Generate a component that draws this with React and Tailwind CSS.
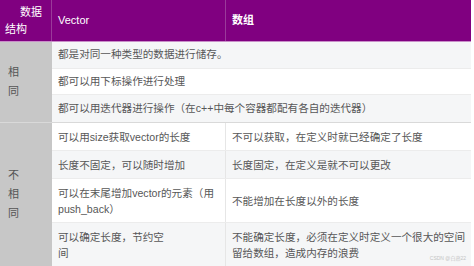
const rows = [
  { kind: 'merged', text: '都是对同一种类型的数据进行储存。', shade: true },
  { kind: 'merged', text: '都可以用下标操作进行处理', shade: false },
  { kind: 'merged', text: '都可以用迭代器进行操作（在c++中每个容器都配有各自的迭代器）', shade: true },
  { kind: 'split', vec: ['可以用size获取vector的长度'], arr: ['不可以获取，在定义时就已经确定了长度'], shade: false },
  { kind: 'split', vec: ['长度不固定，可以随时增加'], arr: ['长度固定，在定义是就不可以更改'], shade: true },
  { kind: 'split', vec: ['可以在末尾增加vector的元素（用', 'push_back）'], arr: ['不能增加在长度以外的长度'], shade: false },
  { kind: 'split', vec: ['可以确定长度，节约空', '间'], arr: ['不能确定长度，必须在定义时定义一个很大的空间', '留给数组，造成内存的浪费'], shade: true },
];

const Lines = ({ lines }) => lines.map((l, i) => (
  <span key={i} className="block whitespace-nowrap">{l}</span>
));

const Cell = ({ children, shade, border = true }) => (
  <div className={`flex items-center px-[6px] py-[5.5px] leading-[16px] ${shade ? 'bg-[#f5f6f7]' : 'bg-white'} ${border ? 'border-r border-[#e6e6e6]' : ''}`}>
    {children}
  </div>
);

const SideLabel = ({ chars }) => (
  <div className="flex flex-col justify-center bg-[#c7c7c7] pl-[8px] text-[11px] leading-[19px] text-[#555]">
    {chars.map(c => <span key={c}>{c}</span>)}
  </div>
);

export default function App() {
  const same = rows.slice(0, 3);
  const diff = rows.slice(3);

  return (
    <div
      className="relative w-[474px] h-[266px] bg-white overflow-hidden text-[10.6px] text-[#575757]"
      style={{ fontFamily: '"Liberation Sans", "Noto Sans CJK SC", sans-serif' }}
    >
      <div className="w-[471px]">
        {/* header */}
        <div className="grid grid-cols-[52px_174px_1fr] h-[42px] bg-[#800080] text-white border-b border-[#c98ec9]">
          <div className="flex flex-col justify-center text-[11px] leading-[17px] border-r border-[#9a3a9a]">
            <span className="pl-[20px]">数据</span>
            <span className="pl-[5px]">结构</span>
          </div>
          <div className="flex items-center pl-[6px] text-[11px] border-r border-[#9a3a9a]">Vector</div>
          <div className="flex items-center pl-[6px] text-[11px] font-bold">数组</div>
        </div>

        {/* 相同 */}
        <div className="grid grid-cols-[52px_1fr] border-b border-[#d9d9d9]">
          <SideLabel chars={['相', '同']} />
          <div className="flex flex-col">
            {same.map((r, i) => (
              <div key={i} className={`border-b border-[#ececec] last:border-b-0 ${i === 1 ? 'h-[26px]' : 'h-[27px]'}`}>
                <div className={`h-full flex items-center px-[6px] ${r.shade ? 'bg-[#f5f6f7]' : 'bg-white'}`}>{r.text}</div>
              </div>
            ))}
          </div>
        </div>

        {/* 不相同 */}
        <div className="grid grid-cols-[52px_1fr]">
          <SideLabel chars={['不', '相', '同']} />
          <div className="flex flex-col">
            {diff.map((r, i) => (
              <div key={i} className="grid grid-cols-[174px_1fr] border-b border-[#ececec] last:border-b-0">
                <Cell shade={r.shade}><div><Lines lines={r.vec} /></div></Cell>
                <Cell shade={r.shade} border={false}><div><Lines lines={r.arr} /></div></Cell>
              </div>
            ))}
          </div>
        </div>
      </div>

      <span className="absolute right-[8px] bottom-[5px] text-[5px] leading-none text-[#c4c4c4]">CSDN @白燕22</span>
    </div>
  );
}
